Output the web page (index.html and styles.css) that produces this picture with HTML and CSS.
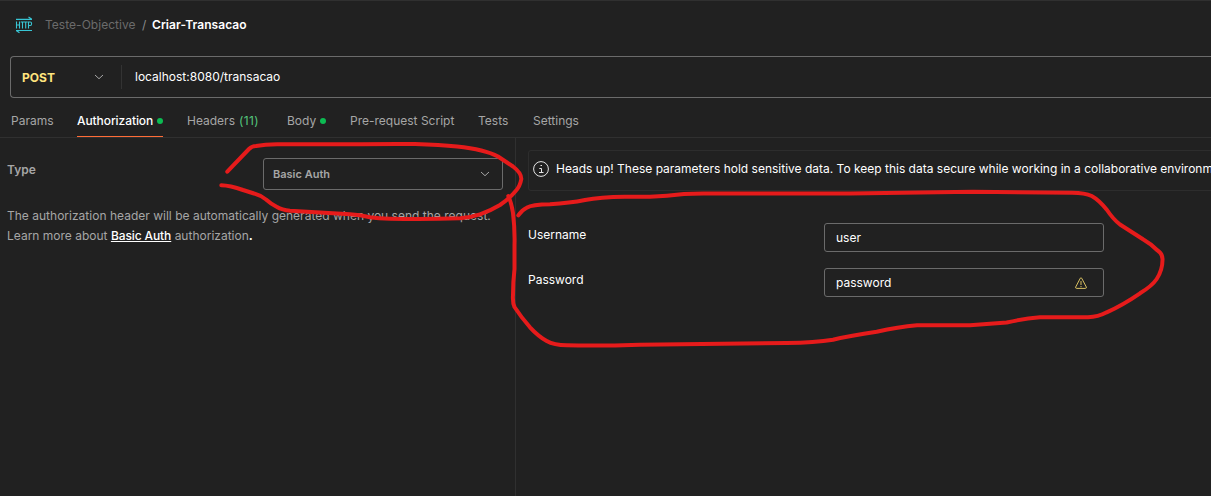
FILE: index.html
```html
<!DOCTYPE html>
<html lang="en">
<head>
<meta charset="utf-8">
<title>Criar-Transacao</title>
<link rel="stylesheet" href="styles.css">
</head>
<body>
<main class="app">
  <header class="crumbs">
    <svg class="http-icon" width="18" height="18" viewBox="0 0 18 18" fill="none" stroke="#38c5d4">
      <path d="M1 3.300H17M13.500 1L16.800 3.300M1 14.500H17M1.200 14.500L4.500 16.800" stroke-width="1.200"/>
      <path d="M1.500 5.500V12.500M4.500 5.500V12.500M1.500 9H4.500M5.700 6H9.300M7.500 6V12.500M9.300 6H12.700M10.700 6V12.500M13.500 12.500V6H15.200Q16.600 6 16.600 7.700T15.200 9.500H13.500" stroke-width="1.100"/>
    </svg>
    <span class="parent">Teste-Objective</span><span class="slash">/</span><span class="current">Criar-Transacao</span>
  </header>
  <section class="request">
    <div class="method"><span>POST</span>
      <svg width="10" height="6" viewBox="0 0 10 6" fill="none" stroke="#a6a6a6"><path d="M1 1L5 4.700L9 1"/></svg>
    </div>
    <span class="url">localhost:8080/transacao</span>
  </section>
  <nav class="tabs">
    <span class="tab params">Params</span>
    <span class="tab active">Authorization<i class="dot"></i></span>
    <span class="tab headers">Headers <b>(11)</b></span>
    <span class="tab body-tab">Body<i class="dot"></i></span>
    <span class="tab script">Pre-request Script</span>
    <span class="tab tests">Tests</span>
    <span class="tab settings">Settings</span>
  </nav>
  <div class="panes">
    <section class="left">
      <div class="type-row">
        <span class="type">Type</span>
        <div class="select"><span>Basic Auth</span>
          <svg width="10" height="6" viewBox="0 0 10 6" fill="none" stroke="#a6a6a6"><path d="M1 1L5 4.700L9 1"/></svg>
        </div>
      </div>
      <p class="help"><span class="line1">The authorization header will be automatically generated when you send the request.</span><br><span class="line2">Learn more about <a>Basic Auth</a> authorization<b>.</b></span></p>
    </section>
    <section class="right">
      <div class="notice">
        <svg width="16" height="16" viewBox="0 0 16 16" fill="none" stroke="#e6e6e6"><circle cx="8" cy="8" r="7.400"/><path d="M6.300 7.500H8.500V11.500M6 11.500H10.500M7.500 4.500H9"/></svg>
        <span class="notice-text">Heads up! These parameters hold sensitive data. To keep this data secure while working in a collaborative environment</span>
      </div>
      <div class="field"><label>Username</label><div class="input"><span class="user">user</span></div></div>
      <div class="field"><label>Password</label><div class="input"><span class="password">password</span>
        <svg width="12" height="12" viewBox="0 0 12 12" fill="none" stroke="#d8c062"><path d="M5.300 1.200Q6 .2 6.700 1.200L11.300 10Q11.600 11.400 10.500 11.400H1.500Q.4 11.400 .7 10ZM6 4V8M6 9V10.200"/></svg>
      </div></div>
    </section>
  </div>
  <svg class="marks" width="1211" height="496" viewBox="0 0 1211 496">
    <path d="M227.300 171.700L249 149Q252 146 256 146Q265 144.500 277 144.200H360Q390 143.800 415 144Q440 144.700 457 146.500Q485 149.500 498 156.500L513 166.500Q521.500 173 521.300 179Q520 187 515 191.700Q509 199 500 205Q490 211 480 214.300Q470 217.500 460 218.300Q425 219.500 390 218.700Q378 218.500 370 217.300Q360 215 350 214.300L290 210.700Q282 210 277 207Q271 204 266 199.500Q260 195 254 193.500L243 190Q230 185.500 221.300 185.300"/>
    <path d="M508.300 196Q511.500 203 513 213Q515 230 514.500 245V269Q513 282 513 295Q512.500 303 514.500 307Q521 317 530 327.300Q538 336 546.700 341Q554 345 566.700 345.300Q600 346 640 344.700L786.700 343Q815 342.500 833 339.700Q850 335.500 876.700 331.700Q898 327 917 325.300H970Q988 324 1006.700 322.500Q1024 318.500 1040 317.300H1088Q1098 317 1106.700 312.300Q1123 305 1140 293.300Q1152 286 1156.700 279Q1162.500 270 1162.500 260Q1163 254 1157 250Q1151 244 1143 239.300L1120 224.500Q1113 219 1107 210Q1099 200 1091.700 196Q1085 193 1072 192.800L973 191.700L850 193.500H710Q695 193.300 684 194Q667 196 650 196.700H625Q600 197 585 200Q570 203 550 204.300Q532 204.500 526.700 207.700Q522 210 518.300 215.300"/>
  </svg>
</main>
</body>
</html>
```
FILE: styles.css
```css
* { box-sizing: border-box; }
body { margin: 0; background: #212121; overflow: hidden; font: 12px/16px Inter, sans-serif; color: #fff; }
svg { display: block; flex: none; }
.app { width: 1211px; height: 496px; position: relative; overflow: hidden; display: flex; flex-direction: column; border-top: 1px solid #303030; white-space: nowrap; }
.crumbs { height: 48px; margin-bottom: 7px; padding-left: 15px; display: flex; align-items: center; flex: none; }
.http-icon { margin-right: 12px; }
.parent { color: #6b6b6b; width: 98px; letter-spacing: .03px; }
.slash { color: #8a8a8a; width: 10px; margin-left: -1px; }
.current { font-weight: 600; letter-spacing: .07px; }
.request { height: 42px; flex: none; margin-left: 10px; border: 1px solid #6b6b6b; border-right: 0; border-radius: 4px 0 0 4px; display: flex; align-items: center; }
.method { width: 111px; height: 24px; padding: 0 17px 0 11px; border-right: 1px solid #333; display: flex; align-items: center; justify-content: space-between; color: #ffe47e; font-weight: 700; }
.method span { padding-top: 2px; }
.url { margin-left: 13px; }
.tabs { height: 40px; flex: none; display: flex; border-bottom: 1px solid #303030; padding-left: 11px; color: #a6a6a6; }
.tab { height: 39px; padding-top: 15px; display: flex; flex: none; }
.tab b { color: #54c77d; font-weight: 400; margin-left: 4px; letter-spacing: .4px; }
.params { width: 66px; }
.active { width: 86px; margin-right: 24px; color: #fff; font-weight: 500; letter-spacing: -.08px; border-bottom: 1px solid #ff6c37; }
.headers { width: 100px; }
.body-tab { width: 63px; }
.script { width: 128px; }
.tests { width: 55px; }
.dot { width: 6px; height: 6px; background: #0cbb52; border-radius: 50%; margin: 5px 0 0 auto; }
.body-tab .dot { margin-left: 4px; }
.panes { flex: 1; display: flex; }
.left { width: 516px; flex: none; border-right: 1px solid #303030; padding: 20px 12px 0 7px; color: #a6a6a6; }
.type-row { display: flex; justify-content: space-between; height: 32px; font-weight: 600; }
.type { padding-top: 4px; }
.select { width: 240px; height: 32px; border: 1px solid #6b6b6b; border-radius: 3px; display: flex; align-items: center; justify-content: space-between; padding: 0 12px 0 9px; font-size: 11px; }
.help { margin: 16px 0 0; line-height: 20px; }
.line1 { letter-spacing: .01px; }
.help a { color: #fff; font-weight: 500; letter-spacing: -.1px; text-decoration: underline; }
.help b { color: #fff; }
.right { flex: 1; padding: 12px 0 0 12px; overflow: hidden; }
.notice { height: 41px; width: 760px; border: 1px solid #2d2d2d; border-radius: 3px; display: flex; align-items: center; gap: 7px; padding: 0 4px 3px; margin-bottom: 32px; }
.field { display: flex; height: 29px; margin-bottom: 16px; }
.field label { width: 296px; padding-top: 4px; }
.input { width: 280px; height: 29px; border: 1px solid #6b6b6b; border-radius: 3px; padding: 0 16px 0 11px; display: flex; align-items: center; justify-content: space-between; }
.marks { position: absolute; left: 0; top: -1px; fill: none; stroke: #e61b1b; stroke-width: 4; stroke-linecap: round; stroke-linejoin: round; pointer-events: none; }
```
